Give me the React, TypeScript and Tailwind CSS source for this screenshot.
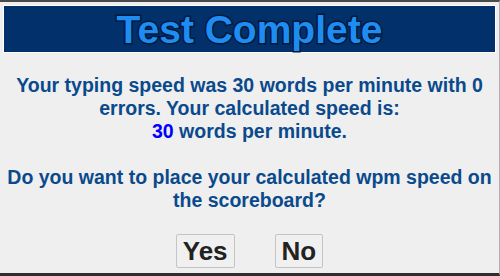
export default function App() {
  return (
    <div className="w-[500px] h-[276px] overflow-hidden bg-[#efefef] border-t-2 border-t-[#4a4a4a] border-b-[3px] border-b-[#2e2e2e] border-r border-r-[#b0b0b0] font-['Liberation_Sans',Arial,sans-serif]">
      <div className="mx-[3px] mt-[3px] h-[48px] border border-white bg-[#02306a] flex items-center justify-center">
        <h1 className="text-[39px] leading-none font-bold text-[#1e8cf2] [-webkit-text-stroke:3px_#001a3a] [paint-order:stroke_fill]">
          Test Complete
        </h1>
      </div>
      <p className="mt-[21px] px-[5px] text-center text-[19.5px] leading-[23px] font-bold text-[#0a4a8c]">
        Your typing speed was 30 words per minute with 0 errors. Your calculated speed is:
        <br />
        <span className="text-[#0000ff]">30</span> words per minute.
        <br />
        <br />
        Do you want to place your calculated wpm speed on the scoreboard?
      </p>
      <div className="mt-[22px] flex justify-center gap-[40px]">
        <button
          type="button"
          className="h-[34px] px-[6px] rounded-[2px] border border-[#c4c4c4] bg-[#f0f0f0] text-[26px] leading-none font-bold text-[#222]"
        >
          Yes
        </button>
        <button
          type="button"
          className="h-[34px] px-[6px] rounded-[2px] border border-[#c4c4c4] bg-[#f0f0f0] text-[26px] leading-none font-bold text-[#222]"
        >
          No
        </button>
      </div>
    </div>
  );
}
